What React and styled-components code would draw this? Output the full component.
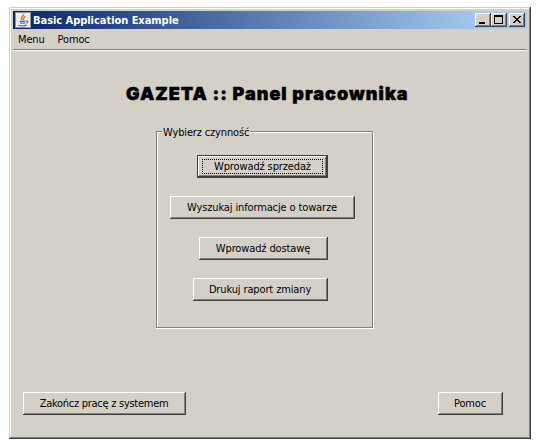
import React from "react";
import styled, { createGlobalStyle, css } from "styled-components";

const GlobalStyle = createGlobalStyle`
  * { box-sizing: border-box; }
  body { margin: 0; background: #fff; overflow: hidden; }
`;

const raised = css`
  box-shadow: inset -1px -1px #404040, inset 1px 1px #fff, inset -2px -2px #808080;
`;

const Desktop = styled.div`
  width: 542px;
  height: 446px;
  padding: 7px 11px 7px 9px;
  background: #fff;
  color: #000;
  font: 11px/14px "DejaVu Sans Condensed", "DejaVu Sans", sans-serif;
  font-stretch: condensed;
  white-space: nowrap;
`;

const Window = styled.main`
  width: 522px;
  height: 432px;
  padding: 4px;
  display: flex;
  flex-direction: column;
  background: #d4d0c8;
  box-shadow: inset -1px -1px #404040, inset 1px 1px #d4d0c8, inset -2px -2px #808080, inset 2px 2px #fff;
`;

const TitleBar = styled.header`
  height: 18px;
  flex: none;
  display: flex;
  align-items: center;
  padding: 0 2px;
  background: linear-gradient(90deg, #0a246a, #a6caf0 92%);
`;

const Caption = styled.span`
  flex: 1;
  margin: 1px 0 0 2px;
  color: #fff;
  font-weight: bold;
  letter-spacing: ${(p) => p.$tracking}px;
`;

const WindowButton = styled.button`
  width: 16px;
  height: 14px;
  padding: 0;
  margin-left: ${(p) => (p.$apart ? 2 : 0)}px;
  border: 0;
  display: flex;
  background: #d4d0c8;
  ${raised}
`;

const MenuBar = styled.nav`
  height: 22px;
  flex: none;
  display: flex;
  gap: 13px;
  padding: 4px 5px 0;
  letter-spacing: -0.15px;
  border-bottom: 1px solid #fff;
  box-shadow: inset 0 -1px #808080;
`;

const Heading = styled.h1`
  margin: 31px 0 0 113px;
  height: 24px;
  flex: none;
  font: 900 18px/24px Inter, sans-serif;
  letter-spacing: ${(p) => p.$tracking}px;
  -webkit-text-stroke: 0.5px #000;
`;

const Group = styled.section`
  width: 218px;
  height: 204px;
  flex: none;
  margin: 19px 0 0 143px;
  display: flex;
  flex-direction: column;
`;

const GroupTop = styled.div`
  height: 14px;
  flex: none;
  display: flex;
  align-items: flex-start;
`;

const TopEdge = styled.span`
  width: ${(p) => p.$width || "auto"};
  flex: ${(p) => (p.$width ? "none" : 1)};
  height: 8px;
  margin-top: 6px;
  border-top: 1px solid #808080;
  box-shadow: inset 0 1px #fff;
  ${(p) => p.$side === "left" && css`border-left: 1px solid #808080; box-shadow: inset 1px 1px #fff;`}
  ${(p) => p.$side === "right" && css`border-right: 1px solid #fff; box-shadow: inset -1px 0 #808080, inset 0 1px #fff;`}
`;

const GroupTitle = styled.span`
  width: 88px;
  padding: 1px 0 0 1px;
  letter-spacing: ${(p) => p.$tracking}px;
`;

const GroupBody = styled.div`
  flex: 1;
  padding: 16px 0 0;
  display: flex;
  flex-direction: column;
  gap: 18px;
  box-shadow: inset -1px -1px #fff, inset 1px 0 #808080, inset -2px -2px #808080, inset 2px 0 #fff;
`;

const PushButton = styled.button`
  width: ${(p) => p.$width}px;
  height: 23px;
  flex: none;
  margin: 0 0 0 ${(p) => p.$indent || 0}px;
  padding: 0 1px 0 0;
  border: 0;
  display: flex;
  align-items: center;
  justify-content: center;
  color: #000;
  font: inherit;
  background: #d4d0c8;
  letter-spacing: ${(p) => p.$tracking || -0.13}px;
  ${raised}
  ${(p) => p.$focused && css`
    padding: 0;
    border: 1px solid #404040;
  `}
`;

const FocusRing = styled.span`
  width: 121px;
  height: 15px;
  display: flex;
  align-items: center;
  justify-content: center;
  border: 1px dotted #000;
`;

const Footer = styled.footer`
  display: flex;
  justify-content: space-between;
  margin: auto 24px 20px 10px;
`;

const JavaIcon = () => (
  <svg width="16" height="16" viewBox="0 0 16 16">
    <rect width="16" height="16" fill="#8b96a4" />
    <rect x="1" y="1" width="14" height="14" fill="#f1f0eb" />
    <path d="M8.5 2C9.4 4 4.2 5 7.2 8.4M10.3 4.3C7.5 5.7 9.5 6.6 8 8.3" fill="none" stroke="#e8782e" strokeWidth="1.4" />
    <path d="M4.5 9.3h6M11 9c2.6-.5 2.2 1.7.2 2.1M5.2 11.1h5M3.2 13.2c1.5.9 6.7.8 8.6-.1" fill="none" stroke="#4f7899" strokeWidth="1.2" />
  </svg>
);

const WindowGlyph = ({ kind }) => (
  <svg width="16" height="14" shapeRendering="crispEdges">
    {kind === "min" && <path d="M4 9h6v2H4z" />}
    {kind === "max" && <path d="M3 2h9v9H3zM4 4v6h7V4z" fillRule="evenodd" />}
    {kind === "close" && (
      <path d="M4 3h2v1h1v1h2V4h1V3h2v1h-1v1h-1v1H9v1h1v1h1v1h1v1h-2V9H9V8H7v1H6v1H4V9h1V8h1V7h1V6H6V5H5V4H4z" />
    )}
  </svg>
);

export default function App() {
  return (
    <>
      <GlobalStyle />
      <Desktop>
        <Window>
          <TitleBar>
            <JavaIcon />
            <Caption $tracking={-0.04}>Basic Application Example</Caption>
            <WindowButton aria-label="Minimize"><WindowGlyph kind="min" /></WindowButton>
            <WindowButton aria-label="Maximize"><WindowGlyph kind="max" /></WindowButton>
            <WindowButton $apart aria-label="Close"><WindowGlyph kind="close" /></WindowButton>
          </TitleBar>
          <MenuBar>
            <span>Menu</span>
            <span>Pomoc</span>
          </MenuBar>
          <Heading $tracking={1.02}>GAZETA :: Panel pracownika</Heading>
          <Group>
            <GroupTop>
              <TopEdge $side="left" $width="6px" />
              <GroupTitle $tracking={-0.15}>Wybierz czynność</GroupTitle>
              <TopEdge $side="right" />
            </GroupTop>
            <GroupBody>
              <PushButton $width={131} $indent={41} $focused>
                <FocusRing>Wprowadź sprzedaż</FocusRing>
              </PushButton>
              <PushButton $width={185} $indent={14}>Wyszukaj informacje o towarze</PushButton>
              <PushButton $width={129} $indent={43}>Wprowadź dostawę</PushButton>
              <PushButton $width={135} $indent={37}>Drukuj raport zmiany</PushButton>
            </GroupBody>
          </Group>
          <Footer>
            <PushButton $width={163} $tracking={-0.27}>Zakończ pracę z systemem</PushButton>
            <PushButton $width={65}>Pomoc</PushButton>
          </Footer>
        </Window>
      </Desktop>
    </>
  );
}
